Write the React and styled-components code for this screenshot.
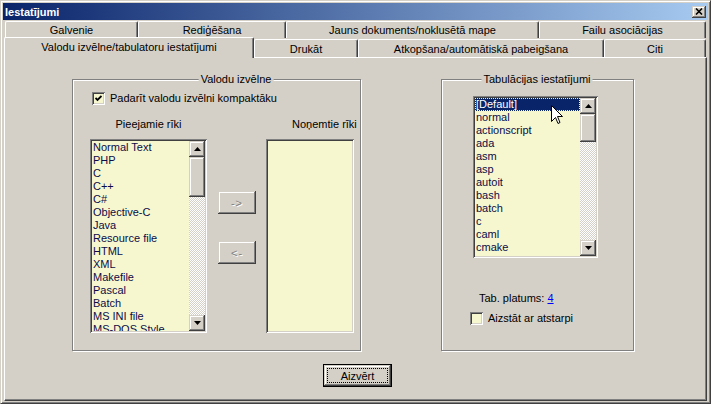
import styled, { createGlobalStyle } from 'styled-components';

const GlobalStyle = createGlobalStyle`
  html, body { margin: 0; padding: 0; background: #d4d0c8; }
  body {
    font-family: "Liberation Sans", Arial, sans-serif;
    font-size: 11px;
    color: #000;
  }
`;

const face = '#d4d0c8';
const listBg = '#f6f7cf';

const raised = `
  box-shadow: inset -1px -1px #404040, inset 1px 1px #d4d0c8,
    inset -2px -2px #808080, inset 2px 2px #fff;
`;
const sunken = `
  box-shadow: inset 1px 1px #808080, inset -1px -1px #fff,
    inset 2px 2px #404040, inset -2px -2px #d4d0c8;
`;

const Window = styled.div`
  position: relative;
  width: 711px;
  height: 404px;
  box-sizing: border-box;
  background: ${face};
  border: 1px solid;
  border-color: #d4d0c8 #404040 #404040 #d4d0c8;
  box-shadow: inset 1px 1px #fff, inset -1px -1px #808080;
  padding: 2px;
  display: flex;
  flex-direction: column;
  overflow: hidden;
`;

const TitleBar = styled.div`
  height: 17px;
  flex-shrink: 0;
  display: flex;
  align-items: center;
  justify-content: space-between;
  padding: 0 2px;
  background: linear-gradient(to right, #0a246a, #a6caf0);
  color: #fff;
  font-weight: bold;
  font-size: 11px;
`;

const CloseButton = styled.div`
  width: 14px;
  height: 12px;
  background: ${face};
  ${raised}
  display: flex;
  align-items: center;
  justify-content: center;
`;

const Body = styled.div`
  flex: 1;
  display: flex;
  flex-direction: column;
  padding: 0 1px;
  margin-top: 1px;
`;

const TabRow = styled.div`
  display: flex;
  align-items: flex-start;
  height: ${p => p.$h}px;
  margin-left: ${p => p.$indent || 0}px;
  margin-top: ${p => p.$top || 0}px;
  flex-shrink: 0;
`;

const Tab = styled.div`
  position: relative;
  box-sizing: border-box;
  width: ${p => p.$w}px;
  height: ${p => (p.$active ? 21 : p.$back ? 17 : 18)}px;
  margin-top: ${p => (p.$active || p.$back ? 0 : 2)}px;
  z-index: ${p => (p.$active ? 2 : 0)};
  background: ${face};
  border-top: 1px solid #fff;
  border-left: 1px solid #fff;
  border-right: 1px solid #404040;
  box-shadow: inset -1px 0 #808080;
  border-top-left-radius: 2px;
  border-top-right-radius: 2px;
  padding-top: ${p => (p.$back ? 2 : 3)}px;
  line-height: 13px;
  text-align: center;
  white-space: nowrap;
`;

const Panel = styled.div`
  flex: 1;
  display: flex;
  flex-direction: column;
  background: ${face};
  border-top: 1px solid #fff;
  border-left: 1px solid #fff;
  border-right: 1px solid #404040;
  border-bottom: 1px solid #404040;
  box-shadow: inset -1px -1px #808080;
  padding-top: 21px;
`;

const Groups = styled.div`
  display: flex;
  gap: 80px;
  margin-left: 67px;
`;

const GroupBox = styled.div`
  position: relative;
  box-sizing: border-box;
  width: ${p => p.$w}px;
  height: 272px;
  border: 1px solid #808080;
  box-shadow: inset 1px 1px #fff, 1px 1px #fff;
  padding: ${p => p.$pad};
  display: flex;
  flex-direction: column;
  align-items: flex-start;
`;

const Legend = styled.div`
  position: absolute;
  top: -7px;
  left: ${p => p.$center}px;
  transform: translateX(-50%);
  padding: 0 2px;
  background: ${face};
  line-height: 13px;
  white-space: nowrap;
`;

const CheckRow = styled.div`
  display: flex;
  align-items: center;
  gap: 5px;
  height: 13px;
  line-height: 13px;
  margin-left: ${p => p.$indent || 0}px;
  margin-top: ${p => p.$top || 0}px;
  white-space: nowrap;
`;

const CheckBox = styled.div`
  width: 13px;
  height: 13px;
  box-sizing: border-box;
  background: ${listBg};
  ${sunken}
  display: flex;
  align-items: center;
  justify-content: center;
`;

const Columns = styled.div`
  display: flex;
  align-items: flex-start;
  margin-top: 13px;
`;

const Column = styled.div`
  display: flex;
  flex-direction: column;
  width: ${p => p.$w}px;
`;

const Caption = styled.div`
  height: 13px;
  line-height: 13px;
  margin-bottom: 8px;
  white-space: nowrap;
  text-align: ${p => (p.$indent ? 'left' : 'center')};
  padding-left: ${p => p.$indent || 0}px;
`;

const ButtonColumn = styled.div`
  display: flex;
  flex-direction: column;
  gap: 27px;
  padding-top: 73px;
  margin: 0 10px 0 11px;
`;

const PushButton = styled.div`
  width: ${p => p.$w}px;
  height: ${p => p.$h}px;
  box-sizing: border-box;
  background: ${face};
  ${raised}
  display: flex;
  align-items: center;
  justify-content: center;
  color: #808080;
  text-shadow: 1px 1px #fff;
  letter-spacing: 1px;
`;

const DefaultButton = styled.div`
  position: relative;
  width: 69px;
  height: 23px;
  box-sizing: border-box;
  border: 1px solid #000;
  background: ${face};
  ${raised}
  display: flex;
  align-items: center;
  justify-content: center;
  &::after {
    content: '';
    position: absolute;
    inset: 3px;
    border: 1px dotted #000;
  }
`;

const ButtonRow = styled.div`
  display: flex;
  justify-content: center;
  margin-top: 13px;
  padding-left: 4px;
`;

const ListBox = styled.div`
  width: ${p => p.$w}px;
  height: ${p => p.$h}px;
  box-sizing: border-box;
  padding: 2px;
  background: ${listBg};
  ${sunken}
  display: flex;
  flex-shrink: 0;
`;

const Items = styled.div`
  flex: 1;
  overflow: hidden;
  color: #0c0c48;
`;

const Item = styled.div`
  height: 13px;
  line-height: 13px;
  padding-left: 1px;
  white-space: nowrap;
  ${p => p.$selected && `
    background: #0a246a;
    color: #fff;
    outline: 1px dotted ${listBg};
    outline-offset: -1px;
    margin-right: 0;
  `}
`;

const ScrollBar = styled.div`
  width: 16px;
  display: flex;
  flex-direction: column;
`;

const ArrowButton = styled.div`
  width: 16px;
  height: 16px;
  flex-shrink: 0;
  box-sizing: border-box;
  background: ${face};
  ${raised}
  display: flex;
  align-items: center;
  justify-content: center;
`;

const Track = styled.div`
  flex: 1;
  display: flex;
  flex-direction: column;
  background: repeating-conic-gradient(${face} 0 25%, #fff 0 50%) 0 0 / 2px 2px;
`;

const Thumb = styled.div`
  height: ${p => p.$h}px;
  box-sizing: border-box;
  background: ${face};
  ${raised}
`;

const TabWidth = styled.div`
  margin: 34px 0 0 6px;
  line-height: 13px;
  white-space: nowrap;
`;

const Link = styled.span`
  color: #0000ff;
  text-decoration: underline;
`;

const Cursor = styled.svg`
  position: absolute;
  left: 550px;
  top: 104px;
`;

const Arrow = ({ down }) => (
  <svg width="7" height="4" viewBox="0 0 7 4">
    <polygon points={down ? '0,0 7,0 3.5,4' : '3.5,0 7,4 0,4'} fill="#000" />
  </svg>
);

function ScrollList({ items, w, h, thumb, selected }) {
  return (
    <ListBox $w={w} $h={h}>
      <Items>
        {items.map(it => (
          <Item key={it} $selected={it === selected}>{it}</Item>
        ))}
      </Items>
      <ScrollBar>
        <ArrowButton><Arrow /></ArrowButton>
        <Track><Thumb $h={thumb} /></Track>
        <ArrowButton><Arrow down /></ArrowButton>
      </ScrollBar>
    </ListBox>
  );
}

const langs = [
  'Normal Text', 'PHP', 'C', 'C++', 'C#', 'Objective-C', 'Java', 'Resource file',
  'HTML', 'XML', 'Makefile', 'Pascal', 'Batch', 'MS INI file', 'MS-DOS Style',
];

const tabLangs = [
  '[Default]', 'normal', 'actionscript', 'ada', 'asm', 'asp', 'autoit', 'bash',
  'batch', 'c', 'caml', 'cmake', 'cobol',
];

const backTabs = [
  ['Galvenie', 133], ['Rediģēšana', 148], ['Jauns dokuments/noklusētā mape', 253],
  ['Failu asociācijas', 167],
];
const frontTabs = [
  ['Valodu izvēlne/tabulatoru iestatījumi', 250], ['Drukāt', 104],
  ['Atkopšana/automātiskā pabeigšana', 246], ['Citi', 102],
];

export default function App() {
  return (
    <>
      <GlobalStyle />
      <Window>
        <TitleBar>
          <span>Iestatījumi</span>
          <CloseButton>
            <svg width="8" height="7" viewBox="0 0 8 7">
              <path d="M1 0.5 L7 6.5 M7 0.5 L1 6.5" stroke="#000" strokeWidth="1.6" />
            </svg>
          </CloseButton>
        </TitleBar>
        <Body>
          <TabRow $h={17} $indent={1}>
            {backTabs.map(([t, w]) => <Tab key={t} $w={w} $back>{t}</Tab>)}
          </TabRow>
          <TabRow $h={20} $top={-1}>
            {frontTabs.map(([t, w], i) => <Tab key={t} $w={w} $active={i === 0}>{t}</Tab>)}
          </TabRow>
          <Panel>
            <Groups>
              <GroupBox $w={289} $pad="12px 5px 0 17px">
                <Legend $center={163}>Valodu izvēlne</Legend>
                <CheckRow $indent={2}>
                  <CheckBox>
                    <svg width="7" height="7" viewBox="0 0 7 7">
                      <polyline points="0.5,3 2.5,5 6.5,1" fill="none" stroke="#000" strokeWidth="1.8" />
                    </svg>
                  </CheckBox>
                  Padarīt valodu izvēlni kompaktāku
                </CheckRow>
                <Columns>
                  <Column $w={117}>
                    <Caption>Pieejamie rīki</Caption>
                    <ScrollList items={langs} w={117} h={194} thumb={40} />
                  </Column>
                  <ButtonColumn>
                    <PushButton $w={38} $h={23}>-&gt;</PushButton>
                    <PushButton $w={38} $h={23}>&lt;-</PushButton>
                  </ButtonColumn>
                  <Column $w={88}>
                    <Caption $indent={26}>Noņemtie rīki</Caption>
                    <ListBox $w={88} $h={194} />
                  </Column>
                </Columns>
              </GroupBox>
              <GroupBox $w={193} $pad="16px 0 0 31px">
                <Legend $center={95}>Tabulācijas iestatījumi</Legend>
                <ScrollList items={tabLangs} w={125} h={162} thumb={28} selected="[Default]" />
                <TabWidth>Tab. platums: <Link>4</Link></TabWidth>
                <CheckRow $indent={-3} $top={7}>
                  <CheckBox />
                  Aizstāt ar atstarpi
                </CheckRow>
              </GroupBox>
            </Groups>
            <ButtonRow>
              <DefaultButton>Aizvērt</DefaultButton>
            </ButtonRow>
          </Panel>
        </Body>
        <Cursor width="13" height="21" viewBox="0 0 13 21">
          <path d="M0.5 0.5 L0.5 16.5 L4.5 12.5 L7 18.5 L9 17.5 L6.5 11.5 L11.5 11.5 Z"
            fill="#fff" stroke="#000" strokeWidth="1" strokeLinejoin="miter" />
        </Cursor>
      </Window>
    </>
  );
}
